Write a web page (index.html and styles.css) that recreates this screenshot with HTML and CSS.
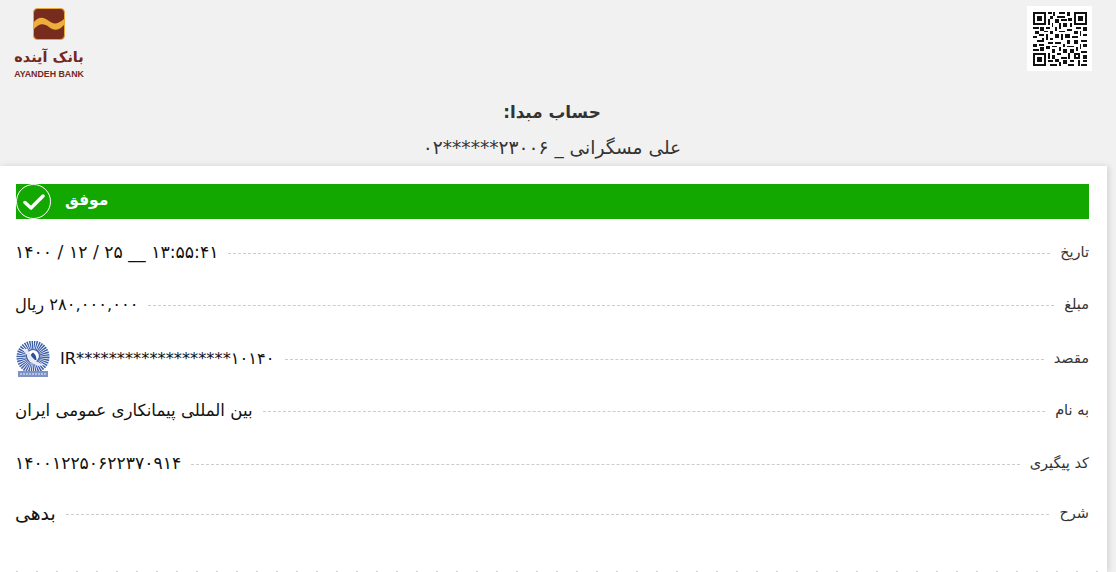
FILE: index.html
```html
<!DOCTYPE html>
<html lang="fa">
<head>
<meta charset="utf-8">
<title>رسید</title>
<link rel="stylesheet" href="styles.css">
</head>
<body>
<header class="top">
  <div class="logo">
    <svg class="logo-mark" width="32" height="32" viewBox="0 0 32 32"><rect x=".5" y=".5" width="31" height="31" rx="4" fill="#782c1e" stroke="#e8a93a"/><path d="M1 14C6 8 11 9 16 13s9 3 15-2v6c-6 6-10 6-15 2S6 15 1 21z" fill="#eeae3c"/></svg>
    <div class="logo-fa">بانک آینده</div>
    <div class="logo-en">AYANDEH BANK</div>
  </div>
  <div class="qr">
    <svg width="54" height="54" viewBox="0 0 29 29" shape-rendering="crispEdges"><path fill="#111" d="M0 0h7v7H0zM1 1v5h5V1zM2 2h3v3H2zM22 0h7v7h-7zM23 1v5h5V1zM24 2h3v3h-3zM0 22h7v7H0zM1 23v5h5v-5zM2 24h3v3H2zM8 0h2v1H8zM11 0h1v2h-1zM14 0h3v1h-3zM18 0h2v2h-2zM9 2h2v2H9zM13 2h4v1h-4zM19 3h2v2h-2zM8 4h1v3H8zM12 4h2v2h-2zM15 4h3v1h-3zM10 6h1v2h-1zM14 6h1v3h-1zM16 6h2v2h-2zM20 6h1v2h-1zM0 8h3v1H0zM4 8h2v2H4zM7 8h2v1H7zM12 8h1v2h-1zM18 9h3v1h-3zM23 8h3v1h-3zM27 8h2v2h-2zM1 10h2v2H1zM6 10h2v1H6zM9 10h2v2H9zM14 10h3v1h-3zM22 10h2v2h-2zM25 10h1v3h-1zM0 13h2v1H0zM3 12h3v1H3zM7 12h1v3H7zM12 12h2v2h-2zM15 12h1v3h-1zM17 12h3v2h-3zM21 13h3v1h-3zM27 12h2v1h-2zM2 15h3v1H2zM5 14h1v2H5zM9 14h2v1H9zM18 15h2v2h-2zM22 15h2v2h-2zM26 15h3v1h-3zM0 17h2v2H0zM3 17h3v1H3zM8 16h3v1H8zM12 16h3v1h-3zM16 17h1v2h-1zM25 17h1v3h-1zM27 17h2v2h-2zM4 19h2v2H4zM7 18h2v2H7zM10 18h3v1h-3zM14 19h1v2h-1zM18 18h4v1h-4zM23 19h1v2h-1zM0 20h3v1H0zM10 20h2v2h-2zM16 20h2v2h-2zM20 20h2v2h-2zM26 21h3v1h-3zM8 22h1v3H8zM13 22h2v1h-2zM19 22h1v3h-1zM22 22h3v3h-3zM23 23v1h1v-1zM27 23h2v2h-2zM10 23h2v2h-2zM15 24h3v1h-3zM8 26h3v1H8zM12 25h2v2h-2zM16 26h2v2h-2zM20 26h2v1h-2zM24 26h1v3h-1zM27 26h2v1h-2zM9 28h4v1H9zM14 27h1v2h-1zM19 28h3v1h-3zM26 28h3v1h-3z"/></svg>
  </div>
</header>
<div class="source">
  <h1 class="source-title">حساب مبدا:</h1>
  <p class="source-value">علی مسگرانی _ <bdi dir="ltr">۰۲******۲۳۰۰۶</bdi></p>
</div>
<main class="card">
  <div class="status">
    <span class="status-icon"><svg width="22" height="18" viewBox="0 0 22 18"><path d="M2 9.500 8 15 20 3" fill="none" stroke="#fff" stroke-width="3.400" stroke-linecap="round" stroke-linejoin="round"/></svg></span>
    <span class="status-text">موفق</span>
  </div>
  <div class="row r1"><span class="label">تاریخ</span><span class="line"></span><span class="value v1"><bdi dir="ltr">۱۴۰۰ / ۱۲ / ۲۵ __ ۱۳:۵۵:۴۱</bdi></span></div>
  <div class="row r2"><span class="label">مبلغ</span><span class="line"></span><span class="value v2">۲۸۰,۰۰۰,۰۰۰ ریال</span></div>
  <div class="row r3"><span class="label">مقصد</span><span class="line"></span><span class="value v3"><bdi dir="ltr">IR*******************۱۰۱۴۰</bdi>
    <svg class="bank" width="36" height="36" viewBox="0 0 36 36"><path d="M3 29.500A16.500 16.500 0 1 1 33 29.500z" fill="#fff"/><circle cx="18" cy="16" r="11" fill="none" stroke="#3d5ea9" stroke-width="11" stroke-dasharray="1.100 .7"/><circle cx="18" cy="15" r="6.500" fill="#fff" stroke="#3d5ea9" stroke-width="1.200"/><path d="M14.500 19c0-4 1.500-6 3.500-7.500 2 1.500 3.500 3.500 3.500 7.500z" fill="#2f4d96"/><path d="M7 8l5 6 3 7 8 4 7-1-8-3-5-5-5-8z" fill="#e7ebf5"/><rect x="3" y="30" width="30" height="6" fill="#7e93c5"/><path d="M5 33h26" stroke="#eef1f8" stroke-dasharray="2 1"/></svg></span></div>
  <div class="row r4"><span class="label">به نام</span><span class="line"></span><span class="value v4">بین المللی پیمانکاری عمومی ایران</span></div>
  <div class="row r5"><span class="label">کد پیگیری</span><span class="line"></span><span class="value v5">۱۴۰۰۱۲۲۵۰۶۲۲۳۷۰۹۱۴</span></div>
  <div class="row r6"><span class="label">شرح</span><span class="line"></span><span class="value v6">بدهی</span></div>
  <div class="cut"></div>
</main>
</body>
</html>
```
FILE: styles.css
```css
* { box-sizing: border-box; }
html, body { margin: 0; height: 572px; overflow: hidden; }
body {
  width: 1116px;
  background: #f1f1f1;
  font-family: "DejaVu Sans", "Noto Sans", sans-serif;
  color: #222;
}
.top { display: flex; justify-content: space-between; align-items: flex-start; height: 96px; padding: 6px 24px 0 14px; }
.logo { width: 70px; display: flex; flex-direction: column; align-items: center; padding-top: 2px; color: #74281c; }
.logo-mark { display: block; }
.logo-fa { direction: rtl; font-size: 14.500px; font-weight: 700; line-height: 21px; margin-top: 7px; white-space: nowrap; }
.logo-en { font-family: "Liberation Sans", sans-serif; font-size: 8.800px; font-weight: 700; line-height: 10px; margin-top: 1px; white-space: nowrap; }
.qr { width: 65px; height: 65px; background: #fff; padding: 6px 6px; }
.qr svg { display: block; }
.source { width: 1104px; height: 70px; direction: rtl; text-align: center; color: #333; }
.source-title { margin: 0; font-size: 16.800px; font-weight: 700; line-height: 32px; }
.source-value { margin: 2px 0 0; font-size: 18.600px; line-height: 36px; }
.card { width: 1107px; height: 406px; background: #fff; box-shadow: 2px 0 6px rgba(0,0,0,.12); padding: 18px 18px 0 16px; position: relative; }
.status { display: flex; align-items: center; height: 35px; background: #13a800; color: #fff; }
.status-icon { display: flex; align-items: center; justify-content: center; width: 35px; height: 35px; border: 1px solid #fff; border-radius: 50%; }
.status-text { direction: rtl; margin: -4px 0 0 14px; font-size: 15.500px; font-weight: 700; }
.row { direction: rtl; display: flex; align-items: center; margin-left: -1px; height: 36px; }
.r1 { margin-top: 14px; }
.r2 { margin-top: 16px; }
.r3 { margin-top: 18px; }
.r4 { margin-top: 16px; }
.r5 { margin-top: 17px; }
.r6 { margin-top: 14px; }
.label { margin-top: 2px; font-size: 14.500px; color: #333; white-space: nowrap; }
.line { flex: 1; margin: 4px 10px 0; border-top: 1px dashed #ccc; }
.value { display: inline-flex; align-items: center; gap: 9px; margin-top: 2px; color: #111; white-space: nowrap; }
.v1 { font-size: 17.300px; }
.v2 { font-size: 16.300px; }
.v3 { font-size: 16.300px; }
.v4 { font-size: 16.600px; }
.v5 { font-size: 17.200px; }
.v6 { font-size: 18.800px; }
.bank { display: block; margin-top: 2px; }
.cut { position: absolute; left: 16px; right: 9px; top: 405px; height: 1px; background: repeating-linear-gradient(90deg, #ccc 0 2px, transparent 2px 20px); }
```
